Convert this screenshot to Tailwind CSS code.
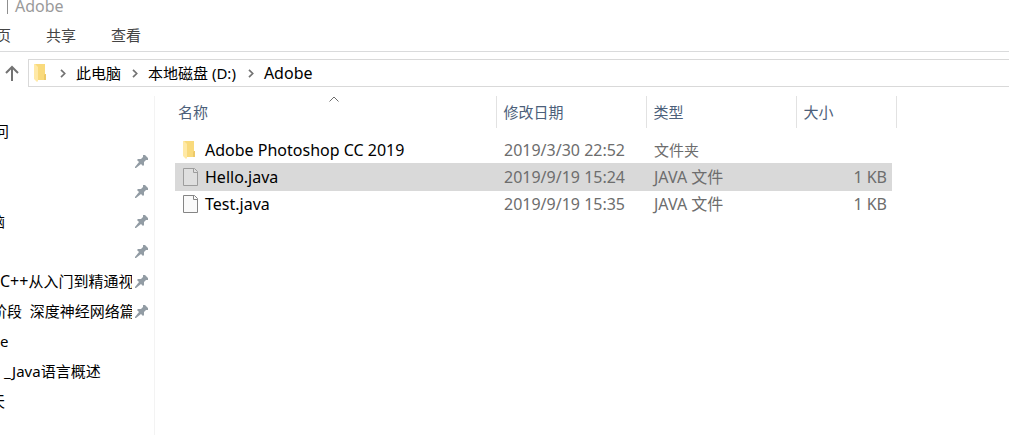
<!DOCTYPE html>
<html lang="zh-CN">
<head>
  <meta charset="UTF-8" />
  <meta name="viewport" content="width=device-width, initial-scale=1.0" />
  <title>Adobe</title>
  <script src="https://cdn.jsdelivr.net/npm/@tailwindcss/browser@4"></script>
</head>
<body class="bg-white text-black text-[15px] leading-5 font-['Noto_Sans','Noto_Sans_CJK_SC',sans-serif] min-h-screen flex flex-col overflow-hidden">
  <!-- Shared icons -->
  <svg class="hidden">
    <symbol id="pin" viewBox="0 0 13 13">
      <path d="M8 0h2l3 3v2h-2L9 7v3l-1 1-2-2-5 4H0v-1l4-5-2-2 1-1h3l2-2z" fill="#929ca4" />
    </symbol>
    <symbol id="folder" viewBox="0 0 13 18">
      <path d="M1 0h10v10h1v6H3z" fill="#f9da7c" />
      <path d="M11 10h1v6h-2v-5z" fill="#edc969" />
      <path d="M0 0h1l3 3v14l-1 1-3-3z" fill="#ffe9a6" />
    </symbol>
    <symbol id="file" viewBox="0 0 15 18">
      <path d="M.5.5h11l3 3v14H.5z" fill="currentColor" stroke="#858585" />
      <path d="M10.500.5v4h4" fill="none" stroke="#858585" />
    </symbol>
    <symbol id="chevron" viewBox="0 0 6 9">
      <path d="M1 .800 4.700 4.500 1 8.200" fill="none" stroke="#737373" stroke-width="1.700" />
    </symbol>
  </svg>

  <!-- Title -->
  <header class="flex items-center gap-[7px] h-5 pl-[7px] pb-2 text-base leading-5 text-[#9a9a9a]">
    <span class="w-px h-4 bg-[#8f8f8f]"></span>
    <h1>Adobe</h1>
  </header>

  <!-- Ribbon tabs -->
  <nav class="flex items-center gap-[35px] h-8 pb-[2px] -ml-1 border-b border-[#dadbdc] text-[#444444]">
    <button>页</button>
    <button>共享</button>
    <button>查看</button>
  </nav>

  <!-- Address bar -->
  <div class="flex items-center pt-[7px] pl-1">
    <button class="w-6 shrink-0" aria-label="上移">
      <svg class="w-4 h-4" viewBox="0 0 16 16" fill="none" stroke="#737373" stroke-width="2"><path d="M8 16V2M2 8l6-6 6 6" /></svg>
    </button>
    <div class="flex items-center flex-1 h-7 pl-[5px] border border-r-0 border-[#d9d9d9]">
      <svg class="w-[13px] h-[18px]"><use href="#folder" /></svg>
      <svg class="w-[6px] h-[9px] ml-[13px] mr-[10px]"><use href="#chevron" /></svg>
      <a href="#">此电脑</a>
      <svg class="w-[6px] h-[9px] ml-[11px] mr-[10px]"><use href="#chevron" /></svg>
      <a href="#">本地磁盘 (D:)</a>
      <svg class="w-[6px] h-[9px] ml-3 mr-[10px]"><use href="#chevron" /></svg>
      <a href="#" class="text-base leading-5">Adobe</a>
    </div>
  </div>

  <div class="flex flex-1 pt-[9px]">
    <!-- Quick access -->
    <aside class="w-[155px] shrink-0 pt-5 border-r border-[#f3f3f3]">
      <ul>
        <li class="flex items-center h-[30px]"><a href="#" class="w-[132px] overflow-hidden whitespace-pre -indent-1.5">问</a></li>
        <li class="flex items-center h-[30px]"><span class="w-[132px]"></span><svg class="w-[13px] h-[13px] ml-[3px]"><use href="#pin" /></svg></li>
        <li class="flex items-center h-[30px]"><span class="w-[132px]"></span><svg class="w-[13px] h-[13px] ml-[3px]"><use href="#pin" /></svg></li>
        <li class="flex items-center h-[30px]"><a href="#" class="w-[132px] overflow-hidden whitespace-pre -indent-2.5">脑</a><svg class="w-[13px] h-[13px] ml-[3px]"><use href="#pin" /></svg></li>
        <li class="flex items-center h-[30px]"><span class="w-[132px]"></span><svg class="w-[13px] h-[13px] ml-[3px]"><use href="#pin" /></svg></li>
        <li class="flex items-center h-[30px]"><a href="#" class="w-[132px] overflow-hidden whitespace-pre"><span class="text-base leading-5">C++</span>从入门到精通视</a><svg class="w-[13px] h-[13px] ml-[3px]"><use href="#pin" /></svg></li>
        <li class="flex items-center h-[30px]"><a href="#" class="w-[132px] overflow-hidden whitespace-pre -indent-2">阶段  深度神经网络篇</a><svg class="w-[13px] h-[13px] ml-[3px]"><use href="#pin" /></svg></li>
        <li class="flex items-center h-[30px]"><a href="#" class="w-[132px] overflow-hidden whitespace-pre">e</a></li>
        <li class="flex items-center h-[30px]"><a href="#" class="w-[132px] overflow-hidden whitespace-pre indent-1">_Java语言概述</a></li>
        <li class="flex items-center h-[30px]"><a href="#" class="w-[132px] overflow-hidden whitespace-pre -indent-2.5">天</a></li>
      </ul>
    </aside>

    <!-- File list -->
    <main class="flex-1 pl-5">
      <table class="table-fixed w-[721px] text-left text-[#6d6d6d]">
        <colgroup>
          <col class="w-[321px]" />
          <col class="w-[150px]" />
          <col class="w-[150px]" />
          <col class="w-24" />
          <col class="w-1" />
        </colgroup>
        <thead class="text-[#4c607a]">
          <tr class="h-8">
            <th class="relative font-normal pl-[3px] border-r border-[#e2e2e2]">
              名称
              <svg class="absolute left-[154px] top-0 w-[10px] h-[6px]" viewBox="0 0 10 6" fill="none" stroke="#6d6d6d"><path d="M.5 5.500 5 1l4.500 4.500" /></svg>
            </th>
            <th class="font-normal pl-[7px] border-r border-[#e2e2e2]">修改日期</th>
            <th class="font-normal pl-[7px] border-r border-[#e2e2e2]">类型</th>
            <th colspan="2" class="font-normal pl-[7px] border-r border-[#e2e2e2]">大小</th>
          </tr>
        </thead>
        <tbody class="text-base leading-5">
          <tr class="h-2"><td colspan="5"></td></tr>
          <tr class="h-[27px]">
            <td class="pl-2 text-black"><div class="flex items-center gap-[7px]"><svg class="w-[15px] h-[18px]" viewBox="0 0 15 18"><use href="#folder" width="13" height="18" /></svg>Adobe Photoshop CC 2019</div></td>
            <td class="pl-2">2019/3/30 22:52</td>
            <td class="pl-2 text-[15px]">文件夹</td>
            <td></td>
          </tr>
          <tr class="h-7">
            <td class="pl-2 text-black bg-[#d9d9d9]"><div class="flex items-center gap-[7px]"><svg class="w-[15px] h-[18px] text-[#e2e2e2] opacity-70"><use href="#file" /></svg>Hello.java</div></td>
            <td class="pl-2 bg-[#d9d9d9]">2019/9/19 15:24</td>
            <td class="pl-2 bg-[#d9d9d9]">JAVA 文件</td>
            <td class="pr-[5px] text-right bg-[#d9d9d9]">1 KB</td>
          </tr>
          <tr class="h-[26px]">
            <td class="pl-2 text-black"><div class="flex items-center gap-[7px]"><svg class="w-[15px] h-[18px] text-[#fafafa]"><use href="#file" /></svg>Test.java</div></td>
            <td class="pl-2">2019/9/19 15:35</td>
            <td class="pl-2">JAVA 文件</td>
            <td class="pr-[5px] text-right">1 KB</td>
          </tr>
        </tbody>
      </table>
    </main>
  </div>
</body>
</html>
